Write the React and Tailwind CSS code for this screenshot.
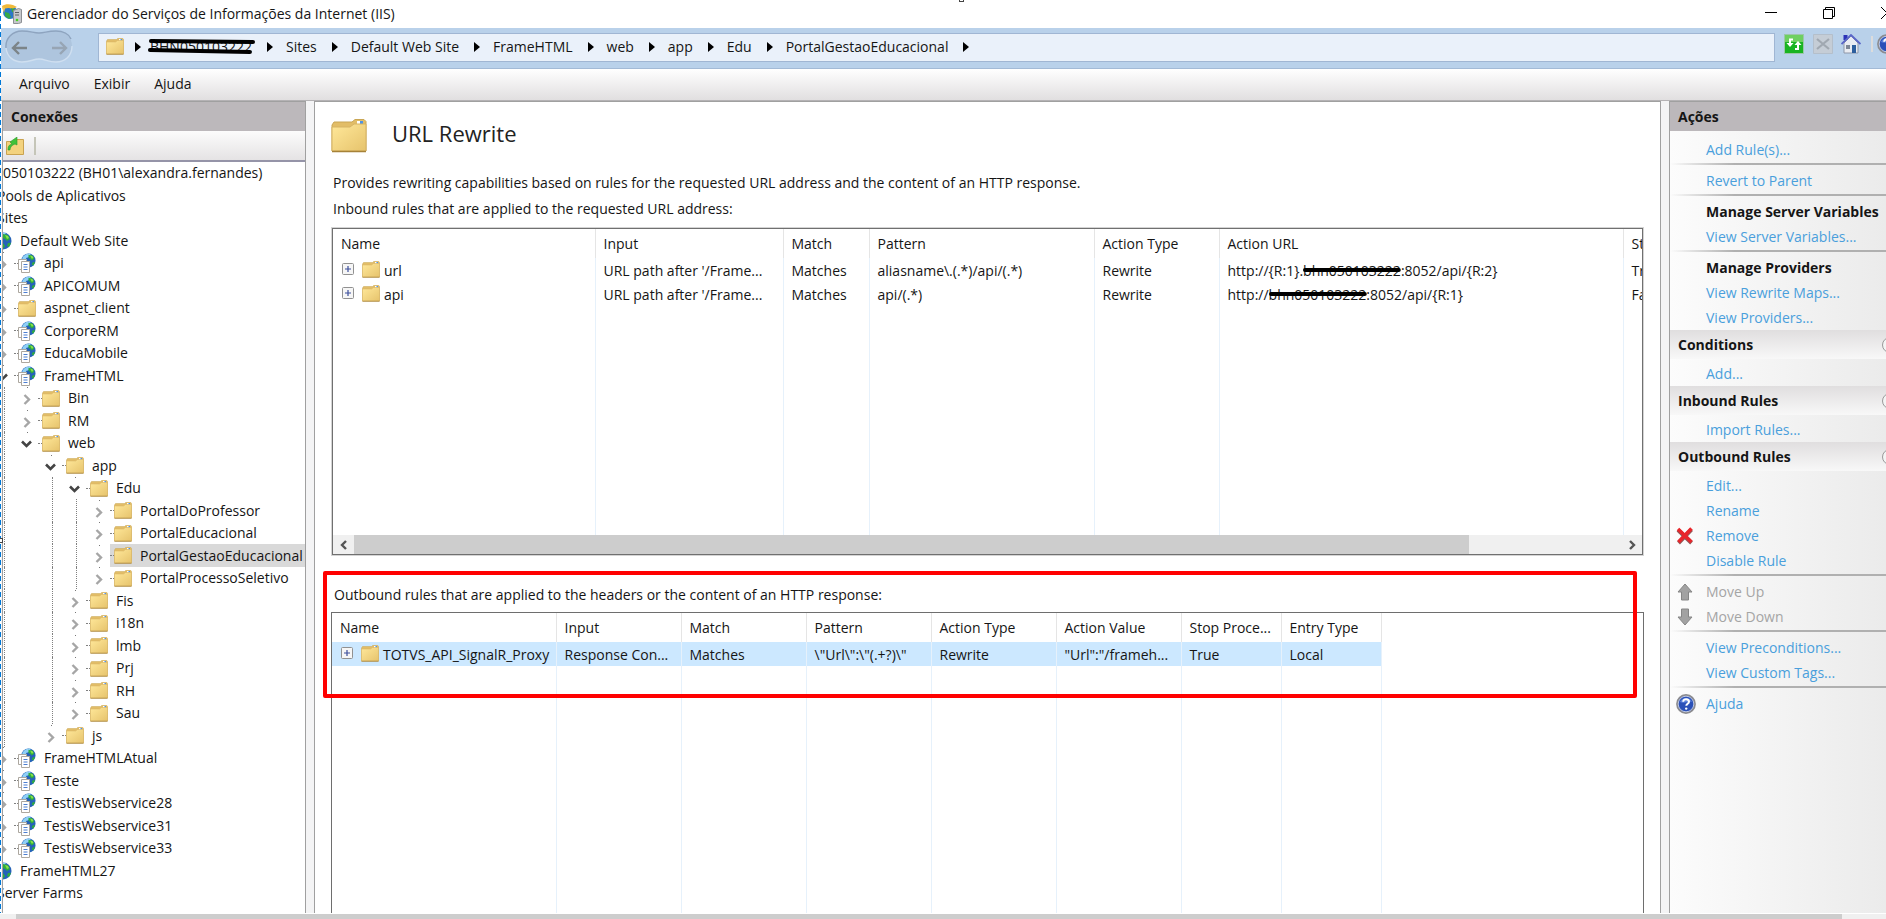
import React from 'react';

const tree = [
  { label: '050103222 (BH01\\alexandra.fernandes)', level: 'server' },
  { label: 'Pools de Aplicativos', level: 'group' },
  { label: 'Sites', level: 'group' },
  { label: 'Default Web Site', level: 'site', icon: 'globe' },
  { label: 'api', depth: 0, icon: 'app' },
  { label: 'APICOMUM', depth: 0, icon: 'app' },
  { label: 'aspnet_client', depth: 0, icon: 'folder' },
  { label: 'CorporeRM', depth: 0, icon: 'app' },
  { label: 'EducaMobile', depth: 0, icon: 'app' },
  { label: 'FrameHTML', depth: 0, icon: 'app', open: true },
  { label: 'Bin', depth: 1, icon: 'folder' },
  { label: 'RM', depth: 1, icon: 'folder' },
  { label: 'web', depth: 1, icon: 'folder', open: true },
  { label: 'app', depth: 2, icon: 'folder', open: true },
  { label: 'Edu', depth: 3, icon: 'folder', open: true },
  { label: 'PortalDoProfessor', depth: 4, icon: 'folder' },
  { label: 'PortalEducacional', depth: 4, icon: 'folder' },
  { label: 'PortalGestaoEducacional', depth: 4, icon: 'folder', selected: true },
  { label: 'PortalProcessoSeletivo', depth: 4, icon: 'folder' },
  { label: 'Fis', depth: 3, icon: 'folder' },
  { label: 'i18n', depth: 3, icon: 'folder' },
  { label: 'lmb', depth: 3, icon: 'folder' },
  { label: 'Prj', depth: 3, icon: 'folder' },
  { label: 'RH', depth: 3, icon: 'folder' },
  { label: 'Sau', depth: 3, icon: 'folder' },
  { label: 'js', depth: 2, icon: 'folder' },
  { label: 'FrameHTMLAtual', depth: 0, icon: 'app' },
  { label: 'Teste', depth: 0, icon: 'app' },
  { label: 'TestisWebservice28', depth: 0, icon: 'app' },
  { label: 'TestisWebservice31', depth: 0, icon: 'app' },
  { label: 'TestisWebservice33', depth: 0, icon: 'app' },
  { label: 'FrameHTML27', level: 'site', icon: 'globe' },
  { label: 'Server Farms', level: 'group' },
];

const levelOffset = {
  server: 'pl-[3px]',
  group: '-ml-[3px]',
  site: '-ml-6',
};

const crumbs = ['Sites', 'Default Web Site', 'FrameHTML', 'web', 'app', 'Edu', 'PortalGestaoEducacional'];

const FolderIcon = ({ className }) => (
  <svg viewBox="0 0 36 34" className={className} aria-hidden="true">
    <defs>
      <linearGradient id="folderFront" x1="0" y1="0" x2="1" y2="1">
        <stop offset="0" stopColor="#ffe89a" />
        <stop offset="1" stopColor="#e6c36c" />
      </linearGradient>
    </defs>
    <path d="M1 6l2-3h18l3-2.500h9l2 2V32H1z" fill="#e2bd67" stroke="#c9a655" strokeWidth="1" />
    <path d="M26 2h6v3h-6z" fill="#fff" />
    <path d="M29 2h3v3h-3z" fill="#4e93e6" />
    <path d="M1 8h18l4-3h12v27H1z" fill="url(#folderFront)" stroke="#d6b364" strokeWidth="1" />
    <path d="M1 32.500h34" stroke="#a68238" strokeWidth="1.500" />
  </svg>
);

const GlobeShape = () => (
  <>
    <circle cx="9" cy="9" r="8.500" fill="#2563b8" />
    <path d="M2 5c3-4 8-5 10-4L9 5 6 6l1 3-3 2-3-2z" fill="#8fd0f7" />
    <path d="M9 2l5 1 2 4-3 2-2-2-2-1zM4 10l5 1 2 3-3 4-4-3zM14 11l3 0-2 4-2-1z" fill="#2fae3c" />
    <path d="M11 3l3 1 1 2-2 1z" fill="#8be04a" />
  </>
);

const GlobeIcon = ({ className }) => (
  <svg viewBox="0 0 18 18" className={className} aria-hidden="true">
    <GlobeShape />
  </svg>
);

const AppIcon = ({ className }) => (
  <svg viewBox="0 0 18 20" className={className} aria-hidden="true">
    <g transform="translate(3 0) scale(0.830)">
      <GlobeShape />
    </g>
    <path d="M.5 6.500h8v10h-8z" fill="#fff" stroke="#aca79f" />
    <path d="M3.500 8.500h8v11h-8z" fill="#fff" stroke="#aca79f" />
    <path d="M5.500 11.500h4M5.500 14h4M5.500 16.500h4" stroke="#4c7ed0" />
  </svg>
);

const HelpIcon = ({ className }) => (
  <svg viewBox="0 0 20 20" className={className} aria-hidden="true">
    <circle cx="10" cy="10" r="9" fill="#2a50b8" stroke="#8b8b8f" strokeWidth="1.800" />
    <circle cx="10" cy="10" r="7.800" fill="none" stroke="#dfe3ee" strokeWidth=".8" />
    <path d="M4 8a6.500 6.500 0 0 1 12 0c-4-1-8 2-12 0z" fill="#5c82dc" />
    <path d="M7.200 7.800c0-3.600 5.800-3.400 5.800 0 0 2-2.700 2-2.700 4" fill="none" stroke="#fff" strokeWidth="2" />
    <circle cx="10.200" cy="14.600" r="1.200" fill="#fff" />
  </svg>
);

const ServerIcon = () => (
  <svg viewBox="0 0 20 20" className="w-5 h-5" aria-hidden="true">
    <circle cx="8" cy="8" r="7" fill="#2a78c8" />
    <path d="M0 2c4-3 11-2 15 1l-5 2C7 3 3 4 1 6z" fill="#f0b93a" />
    <path d="M0 3l3 1-1 5z" fill="#f5c957" />
    <path d="M3 8l4 1 2 4-2 2-4-3zM9 4l4 1v4l-3-1z" fill="#39a845" />
    <path d="M11.500 6.500l5-2 3 1v13l-3 1h-5z" fill="#c6c8cc" stroke="#8d9095" />
    <path d="M13 8.500h4M13 11h4" stroke="#5a5e64" />
    <circle cx="15" cy="16" r="1.300" fill="#46d21e" />
  </svg>
);

const Expander = ({ open }) => (
  <svg viewBox="0 0 14 22" className="w-3.5 h-[22px] shrink-0 overflow-visible" aria-hidden="true">
    <path d="M3 .5h1" stroke="#777" />
    {open ? (
      <path d="M-2 9.500l4.500 4.500L7 9.500" fill="none" stroke="#444" strokeWidth="2.600" />
    ) : (
      <path d="M.5 8L5 12.500.5 17" fill="none" stroke="#a6a6a6" strokeWidth="2.400" />
    )}
  </svg>
);

const Guides = ({ depth }) => (
  <>
    {Array.from({ length: depth }, (_, d) => (
      <span key={d} className="w-6 shrink-0 self-stretch pl-1">
        {d !== 1 && <span className="block h-full border-l border-dotted border-[#808080]" />}
      </span>
    ))}
  </>
);

const TreeIcon = ({ icon }) => {
  if (icon === 'folder') return <FolderIcon className="w-[18px] h-[17px] shrink-0" />;
  if (icon === 'globe') return <GlobeIcon className="w-[18px] h-[18px] shrink-0" />;
  return <AppIcon className="w-[18px] h-5 shrink-0" />;
};

const TreeRow = ({ item }) => {
  if (item.level === 'server' || item.level === 'group') {
    return (
      <li className={`h-[22px] even:h-[23px] flex items-center ${levelOffset[item.level]}`}>{item.label}</li>
    );
  }

  return (
    <li className={`h-[22px] even:h-[23px] flex items-center ${item.level ? levelOffset[item.level] : ''}`}>
      <Guides depth={item.depth || 0} />
      <Expander open={item.open} />
      <span className={`flex-1 self-stretch flex items-center ${item.selected ? 'bg-[#d9d9d9]' : ''}`}>
        <span className="w-1 shrink-0 border-t border-dotted border-[#808080]" />
        <TreeIcon icon={item.icon} />
        <span className="pl-2">{item.label}</span>
      </span>
    </li>
  );
};

const CrumbArrow = () => (
  <svg viewBox="0 0 6 10" className="w-1.5 h-2.5 shrink-0" aria-hidden="true">
    <path d="M0 0l6 5-6 5z" fill="#000" />
  </svg>
);

// Host name crossed out with a thick marker line
const Redacted = ({ children, double }) => (
  <span className="relative inline-block">
    {children}
    <svg viewBox="0 0 100 20" preserveAspectRatio="none" className="absolute inset-0 w-full h-full overflow-visible" aria-hidden="true">
      {double ? (
        <path d="M1 4l100 1M0 13l98 2" stroke="#000" strokeWidth="4" strokeLinecap="round" />
      ) : (
        <path d="M2 9h96" stroke="#000" strokeWidth="4" strokeLinecap="round" />
      )}
    </svg>
  </span>
);

const TitleBar = () => (
  <header className="h-7 shrink-0 bg-white flex items-center pl-0.5">
    <ServerIcon />
    <h1 className="pl-[5px] text-[14px] leading-5 flex-1">Gerenciador do Serviços de Informações da Internet (IIS)</h1>
    <div className="flex items-center gap-[46px] -mr-[7px] pb-0.5">
      <button aria-label="Minimizar" className="block">
        <svg viewBox="0 0 12 12" className="w-3 h-3"><path d="M0 5.500h12" stroke="#000" /></svg>
      </button>
      <button aria-label="Restaurar" className="block">
        <svg viewBox="0 0 12 12" className="w-3 h-3" fill="none" stroke="#000">
          <path d="M.5 2.500h9v9h-9zM2.500 2.500v-2h9v9h-2" />
        </svg>
      </button>
      <button aria-label="Fechar" className="block">
        <svg viewBox="0 0 12 12" className="w-3 h-3"><path d="M0 0l12 12M12 0L0 12" stroke="#000" /></svg>
      </button>
    </div>
  </header>
);

const AddressBar = () => (
  <div className="h-[41px] shrink-0 bg-[#b9d1ea] border-b border-[#a3bad6] flex items-start pl-[5px]">
    <div className="mt-0.5 mr-[25px]">
      <svg viewBox="0 0 68 34" className="w-[68px] h-[34px]" aria-label="Voltar e avançar" role="img">
        <path
          d="M17 1c9 0 11 2 17 2S42 1 51 1c9 0 16 6 16 15s-7 16-16 16c-8 0-11-3-17-3s-8 3-17 3S1 26 1 16 8 1 17 1z"
          fill="#aec5de"
        />
        <path d="M1 18C0 8 8 1 17 1c9 0 11 2 17 2S42 1 51 1c7 0 13 3 15 8" fill="none" stroke="#8ea4bf" strokeWidth="1.400" />
        <path d="M1 18c1 9 8 14 16 14 9 0 11-3 17-3s9 3 17 3c9 0 16-6 16-16" fill="none" stroke="#cfdff0" strokeWidth="1.400" />
        <path d="M22 18H9M14 12l-6 6 6 6" fill="none" stroke="#7c8488" strokeWidth="2.400" />
        <path d="M47 18h13M55 12l6 6-6 6" fill="none" stroke="#97a5b4" strokeWidth="2.400" />
      </svg>
    </div>

    <nav className="mt-[5px] h-[29px] flex-1 bg-[#eaf1fa] border border-[#a0b6d3] flex items-center pl-[7px] pb-0.5">
      <FolderIcon className="w-[18px] h-[17px] mr-[11px]" />
      <CrumbArrow />
      <span className="ml-[9px] mr-[15px] w-[102px] flex">
        <Redacted double>BHN050103222</Redacted>
      </span>
      <CrumbArrow />
      {crumbs.map((crumb) => (
        <React.Fragment key={crumb}>
          <a href="#" className="ml-[13px] mr-[15px]">{crumb}</a>
          <CrumbArrow />
        </React.Fragment>
      ))}
    </nav>

    <div className="mt-1.5 ml-[9px] -mr-[11px] flex items-center gap-2">
      <button aria-label="Atualizar">
        <svg viewBox="0 0 20 20" className="w-5 h-5">
          <path d="M.5.500h19v19H.5z" fill="#19b422" stroke="#9cc7a8" />
          <path d="M1 1h18v7H1z" fill="#6ed060" />
          <path d="M9 5.500H6v5" fill="none" stroke="#fff" strokeWidth="2" />
          <path d="M2.500 9h7L6 13z" fill="#fff" />
          <path d="M11 15h3v-5" fill="none" stroke="#fff" strokeWidth="2" />
          <path d="M10.500 11h7L14 7z" fill="#fff" />
        </svg>
      </button>
      <button aria-label="Parar" className="ml-px">
        <svg viewBox="0 0 20 20" className="w-5 h-5">
          <path d="M.5.500h19v19H.5z" fill="#c5cdd6" stroke="#b4bfcb" />
          <path d="M4 5l12 10M16 5L4 15" stroke="#a0a8b1" strokeWidth="2.200" />
        </svg>
      </button>
      <button aria-label="Início">
        <svg viewBox="0 0 20 20" className="w-5 h-5">
          <path d="M3 9l7-7 7 7v10H3z" fill="#e9ecf2" stroke="#8e97a8" />
          <path d="M2.500 1h4v5h-4z" fill="#2b33b8" />
          <path d="M.5 10L10 1l9.500 9" fill="none" stroke="#5a66c8" strokeWidth="1.800" />
          <path d="M11 11h4v8h-4z" fill="#2d5f9e" />
          <path d="M5 11h4v4H5z" fill="#7d8796" />
        </svg>
      </button>
      <span className="w-0.5 h-4 bg-[#dcdcdc] ml-0.5 -mr-1" />
      <button aria-label="Ajuda"><HelpIcon className="w-5 h-5" /></button>
    </div>
  </div>
);

const MenuBar = () => (
  <div className="h-8 shrink-0 bg-linear-to-b from-white to-[#e1dfe0] border-b border-[#b4b2b4] flex items-center pl-[19px] pb-0.5 gap-6">
    <button>Arquivo</button>
    <button>Exibir</button>
    <button>Ajuda</button>
  </div>
);

const Connections = () => (
  <aside className="w-[304px] shrink-0 bg-white border border-[#a0a0a0] border-b-0 flex flex-col overflow-hidden">
    <h2 className="h-[29px] shrink-0 bg-[#bcb8bb] flex items-center pl-2 font-bold">Conexões</h2>
    <div className="h-[31px] shrink-0 bg-linear-to-b from-[#fcfcfc] to-[#e5e3e4] border-b-2 border-[#9594a8] flex items-center pl-[3px] gap-2.5">
      <button aria-label="Subir um nível">
        <svg viewBox="0 0 18 18" className="w-[18px] h-[18px]">
          <path d="M.5 4.500h8l2-2h7v15H.5z" fill="#f3d27e" stroke="#c9a250" />
          <path d="M2 13c0-4 1-5 4-6L4 5l7-5v8L9 7c-3 1-5 3-5 6z" fill="#3fc23a" stroke="#2b9a2e" strokeWidth=".6" />
        </svg>
      </button>
      <span className="w-0.5 h-[18px] bg-[#c5c5b8]" />
    </div>
    <ul className="-ml-[3px] whitespace-nowrap overflow-hidden">
      {tree.map((item) => (
        <TreeRow key={item.label} item={item} />
      ))}
    </ul>
  </aside>
);

const th = 'h-[29px] pl-2 text-left font-normal border-r border-[#e5e5e5] overflow-hidden';
const td = 'h-6 pl-2 pt-0.5 border-r border-[#e6f1fb] overflow-hidden';

const NameCell = ({ children }) => (
  <span className="flex items-center pl-px">
    <button aria-label="Expandir" className="mr-2 mb-1">
      <svg viewBox="0 0 12 12" className="block w-3 h-3">
        <rect x=".5" y=".5" width="11" height="11" rx="1" fill="#f6f6f6" stroke="#919191" />
        <path d="M3 6h6M6 3v6" stroke="#3c4f9c" strokeWidth="1.200" />
      </svg>
    </button>
    <FolderIcon className="w-[18px] h-[17px] mb-1 mr-1 shrink-0" />
    {children}
  </span>
);

const InboundTable = () => (
  <table className="table-fixed w-full h-full border-collapse whitespace-nowrap">
    <colgroup>
      <col className="w-[262px]" />
      <col className="w-[188px]" />
      <col className="w-[86px]" />
      <col className="w-[225px]" />
      <col className="w-[125px]" />
      <col className="w-[404px]" />
      <col />
    </colgroup>
    <thead>
      <tr>
        {['Name', 'Input', 'Match', 'Pattern', 'Action Type', 'Action URL'].map((name) => (
          <th key={name} className={th}>{name}</th>
        ))}
        <th className="h-[29px] pl-2 text-left font-normal overflow-hidden">Stop</th>
      </tr>
    </thead>
    <tbody>
      <tr>
        <td className={td}><NameCell>url</NameCell></td>
        <td className={td}>URL path after '/Frame...</td>
        <td className={td}>Matches</td>
        <td className={td}>aliasname\.(.*)/api/(.*)</td>
        <td className={td}>Rewrite</td>
        <td className={td}>http://{'{R:1}'}.<Redacted>bhn050103222</Redacted>:8052/api/{'{R:2}'}</td>
        <td className="h-6 pl-2 pt-0.5 overflow-hidden">True</td>
      </tr>
      <tr>
        <td className={td}><NameCell>api</NameCell></td>
        <td className={td}>URL path after '/Frame...</td>
        <td className={td}>Matches</td>
        <td className={td}>api/(.*)</td>
        <td className={td}>Rewrite</td>
        <td className={td}>http://<Redacted>bhn050103222</Redacted>:8052/api/{'{R:1}'}</td>
        <td className="h-6 pl-2 pt-0.5 overflow-hidden">False</td>
      </tr>
      <tr className="h-full">
        {[0, 1, 2, 3, 4, 5].map((n) => (
          <td key={n} className="border-r border-[#e6f1fb]" />
        ))}
        <td />
      </tr>
    </tbody>
  </table>
);

const outboundHeaders = ['Name', 'Input', 'Match', 'Pattern', 'Action Type', 'Action Value', 'Stop Proce...', 'Entry Type'];

const OutboundTable = () => (
  <table className="table-fixed w-full h-full border-collapse whitespace-nowrap">
    <colgroup>
      <col className="w-[224px]" />
      <col className="w-[125px]" />
      <col className="w-[125px]" />
      <col className="w-[125px]" />
      <col className="w-[125px]" />
      <col className="w-[125px]" />
      <col className="w-[100px]" />
      <col className="w-[100px]" />
      <col />
    </colgroup>
    <thead>
      <tr>
        {outboundHeaders.map((name) => (
          <th key={name} className={th}>{name}</th>
        ))}
        <td />
      </tr>
    </thead>
    <tbody>
      <tr>
        <td className={`${td} bg-[#cce8ff]`}><NameCell>TOTVS_API_SignalR_Proxy</NameCell></td>
        <td className={`${td} bg-[#cce8ff]`}>Response Con...</td>
        <td className={`${td} bg-[#cce8ff]`}>Matches</td>
        <td className={`${td} bg-[#cce8ff]`}>\"Url\":\"(.+?)\"</td>
        <td className={`${td} bg-[#cce8ff]`}>Rewrite</td>
        <td className={`${td} bg-[#cce8ff]`}>"Url":"/frameh...</td>
        <td className={`${td} bg-[#cce8ff]`}>True</td>
        <td className={`${td} bg-[#cce8ff]`}>Local</td>
        <td />
      </tr>
      <tr className="h-full">
        {outboundHeaders.map((name) => (
          <td key={name} className="border-r border-[#e6f1fb]" />
        ))}
        <td />
      </tr>
    </tbody>
  </table>
);

const ScrollBar = () => (
  <div className="h-[19px] shrink-0 bg-[#f0f0f0] flex items-stretch">
    <button aria-label="Rolar para a esquerda" className="w-[21px] flex items-center justify-center">
      <svg viewBox="0 0 8 10" className="w-2 h-2.5"><path d="M6 1L2 5l4 4" fill="none" stroke="#555" strokeWidth="2.400" /></svg>
    </button>
    <div className="flex-1">
      <div className="w-[88%] h-full bg-[#cdcdcd]" />
    </div>
    <button aria-label="Rolar para a direita" className="w-[21px] flex items-center justify-center">
      <svg viewBox="0 0 8 10" className="w-2 h-2.5"><path d="M2 1l4 4-4 4" fill="none" stroke="#555" strokeWidth="2.400" /></svg>
    </button>
  </div>
);

const UrlRewrite = () => (
  <main className="flex-1 min-w-0 bg-white border border-[#a0a0a0] border-b-0 px-4 flex flex-col">
    <div className="h-[68px] shrink-0 flex items-center gap-[25px]">
      <FolderIcon className="w-9 h-[34px]" />
      <h2 className="text-[22px] leading-7 pb-1.5 text-[#222]">URL Rewrite</h2>
    </div>

    <p className="h-[26px] shrink-0 pl-0.5 flex items-center">
      Provides rewriting capabilities based on rules for the requested URL address and the content of an HTTP response.
    </p>
    <p className="h-[26px] shrink-0 pl-0.5 flex items-center">
      Inbound rules that are applied to the requested URL address:
    </p>

    <section className="mt-1.5 mx-px h-[327px] shrink-0 border border-[#707070] outline outline-[#d4d4d4] flex flex-col">
      <div className="flex-1 min-h-0 overflow-hidden">
        <InboundTable />
      </div>
      <ScrollBar />
    </section>

    <section className="relative mt-[27px] flex-1 min-h-0 flex flex-col">
      <p className="h-[26px] shrink-0 pl-[3px] flex items-center">
        Outbound rules that are applied to the headers or the content of an HTTP response:
      </p>
      <div className="mt-1 flex-1 min-h-0 border border-b-0 border-[#6e6e6e] overflow-hidden">
        <OutboundTable />
      </div>
      {/* Highlight around the outbound rule */}
      <div className="absolute -left-2 right-[7px] -top-[11px] h-[127px] border-4 border-[#ff0000] rounded-xs pointer-events-none" />
    </section>
  </main>
);

const Action = ({ children, icon, disabled }) => (
  <li className="h-[25px] flex items-center">
    <span className="w-9 shrink-0 pl-1.5">{icon}</span>
    {disabled ? <span className="text-[#a5a5a5]">{children}</span> : <a href="#" className="text-[#4a9fdc]">{children}</a>}
  </li>
);

const ActionHeading = ({ children }) => (
  <li className="h-[25px] flex items-center pl-9 font-bold">{children}</li>
);

const Separator = () => (
  <li className="h-1.5 pt-px" aria-hidden="true">
    <div className="h-0.5 bg-linear-to-r from-transparent via-[#b0b0b0] via-30% to-[#b0b0b0]" />
  </li>
);

const ActionGroup = ({ title, children }) => (
  <section>
    <h3 className="h-[29px] mb-0.5 flex items-center justify-between pl-2 font-bold bg-linear-to-b from-[#e0dedf] to-[#f8f8f8]">
      {title}
      <button aria-label="Recolher" className="-mr-3 w-4 h-4 rounded-full border border-[#999] bg-[#f4f4f4]" />
    </h3>
    <ul>{children}</ul>
  </section>
);

const RemoveIcon = (
  <svg viewBox="0 0 18 18" className="w-[18px] h-[18px]">
    <path d="M2 3l13.500 13M15.500 2.500L2.500 16" stroke="#8f5a5a" strokeWidth="4" />
    <path d="M2 2l13.500 13M15.500 1.500L2.500 15" stroke="#e8262b" strokeWidth="3.600" />
  </svg>
);

const UpIcon = (
  <svg viewBox="0 0 18 18" className="w-[18px] h-[18px]">
    <path d="M9 1l7 8h-3.500v8h-7V9H2z" fill="#a2a2a2" stroke="#868686" />
  </svg>
);

const DownIcon = (
  <svg viewBox="0 0 18 18" className="w-[18px] h-[18px]">
    <path d="M9 17l7-8h-3.500V1h-7v8H2z" fill="#a2a2a2" stroke="#868686" />
  </svg>
);

const Actions = () => (
  <aside className="w-[217px] shrink-0 border border-r-0 border-b-0 border-[#a0a0a0] bg-linear-to-r from-[#fcfcfc] to-[#ebebeb] overflow-hidden whitespace-nowrap">
    <h2 className="h-[29px] bg-[#bcb8bb] flex items-center pl-2 font-bold">Ações</h2>
    <ul className="pt-1.5">
      <Action>Add Rule(s)...</Action>
      <Separator />
      <Action>Revert to Parent</Action>
      <Separator />
      <ActionHeading>Manage Server Variables</ActionHeading>
      <Action>View Server Variables...</Action>
      <Separator />
      <ActionHeading>Manage Providers</ActionHeading>
      <Action>View Rewrite Maps...</Action>
      <Action>View Providers...</Action>
    </ul>

    <ActionGroup title="Conditions">
      <Action>Add...</Action>
    </ActionGroup>

    <ActionGroup title="Inbound Rules">
      <Action>Import Rules...</Action>
    </ActionGroup>

    <ActionGroup title="Outbound Rules">
      <Action>Edit...</Action>
      <Action>Rename</Action>
      <Action icon={RemoveIcon}>Remove</Action>
      <Action>Disable Rule</Action>
      <Separator />
      <Action icon={UpIcon} disabled>Move Up</Action>
      <Action icon={DownIcon} disabled>Move Down</Action>
      <Separator />
      <Action>View Preconditions...</Action>
      <Action>View Custom Tags...</Action>
      <Separator />
      <Action icon={<HelpIcon className="w-5 h-5" />}>Ajuda</Action>
    </ActionGroup>
  </aside>
);

const App = () => {
  return (
    <div className="relative h-screen flex flex-col overflow-hidden bg-[#f4f4f5] text-[#151515] text-[14px] leading-5 font-['Open_Sans','Noto_Sans',sans-serif]">
      <TitleBar />
      <AddressBar />
      <MenuBar />

      <div className="flex-1 min-h-0 flex gap-2 pl-0.5">
        <Connections />
        <UrlRewrite />
        <Actions />
      </div>

      <div className="h-1.5 shrink-0 bg-[#f0f0f0] border-t border-white pl-4 pr-11">
        <div className="h-full bg-[#cdcdcd]" />
      </div>

      {/* Selection outline and handles */}
      <div className="absolute left-0 top-0 bottom-1.5 w-px bg-[repeating-linear-gradient(to_bottom,#0078d7_0px,#0078d7_5px,#ffffff_5px,#ffffff_8px)]" />
      <div className="absolute left-0 top-[538px] w-[3px] h-[5px] bg-white border border-l-0 border-[#444]" />
      <div className="absolute left-[959px] top-0 w-[5px] h-0.5 bg-white border border-t-0 border-[#444]" />
    </div>
  );
};

export default App;
